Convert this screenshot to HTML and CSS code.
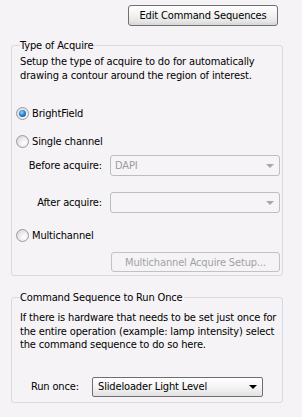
FILE: index.html
```html
<!DOCTYPE html>
<html>
<head>
<meta charset="utf-8">
<link rel="stylesheet" href="styles.css">
</head>
<body>
<div class="panel">
  <div class="top-row">
    <button class="btn btn-edit">Edit Command Sequences</button>
  </div>

  <fieldset class="group group-acquire">
    <legend>Type of Acquire</legend>
    <p class="desc">Setup the type of acquire to do for automatically drawing a contour around the region of interest.</p>

    <div class="radio-row r-bright">
      <span class="radio checked"><span class="dot"></span></span>
      <span class="label">BrightField</span>
    </div>
    <div class="radio-row r-single">
      <span class="radio"></span>
      <span class="label">Single channel</span>
    </div>
    <div class="field-row f-before">
      <span class="field-label">Before acquire:</span>
      <div class="combo disabled"><span class="value">DAPI</span><span class="arrow"></span></div>
    </div>
    <div class="field-row f-after">
      <span class="field-label">After acquire:</span>
      <div class="combo disabled"><span class="value"></span><span class="arrow"></span></div>
    </div>
    <div class="radio-row r-multi">
      <span class="radio"></span>
      <span class="label">Multichannel</span>
    </div>
    <div class="btn-row">
      <button class="btn btn-disabled">Multichannel Acquire Setup...</button>
    </div>
  </fieldset>

  <fieldset class="group group-once">
    <legend>Command Sequence to Run Once</legend>
    <p class="desc desc3">If there is hardware that needs to be set just once for the entire operation (example: lamp intensity) select the command sequence to do so here.</p>
    <div class="once-row">
      <span class="once-label">Run once:</span>
      <div class="combo active"><span class="value">Slideloader Light Level</span><span class="arrow"></span></div>
    </div>
  </fieldset>
</div>
</body>
</html>
```

FILE: styles.css
```css
html, body {
  margin: 0;
  padding: 0;
  background: #f5f3f6;
}
body {
  width: 302px;
  height: 417px;
  overflow: hidden;
  font-family: "DejaVu Sans Condensed", "Liberation Sans", Arial, sans-serif;
  font-size: 11px;
  letter-spacing: -0.15px;
  color: #000;
}
.panel {
  display: flex;
  flex-direction: column;
}
.top-row {
  display: flex;
  justify-content: flex-end;
  padding: 5px 24px 0 0;
}
.btn {
  font-family: inherit;
  font-size: 11px;
  letter-spacing: inherit;
  padding: 0;
  margin: 0;
  box-sizing: border-box;
  border-radius: 3px;
  cursor: default;
}
.btn-edit {
  width: 150px;
  height: 21px;
  border: 1px solid #707070;
  background: linear-gradient(#ffffff 0%, #f3f3f3 45%, #e6e6e6 80%, #d6d6d6 100%);
  color: #000;
}
.btn-disabled {
  width: 169px;
  height: 20px;
  border: 1px solid #c2c2c2;
  background: #f5f3f6;
  color: #a2a2a2;
}
.group {
  margin: 0 0 0 11px;
  width: 272px;
  box-sizing: border-box;
  border: 1px solid #d3dbe4;
  border-radius: 3px;
  padding: 0 2px 0 8px;
  min-width: 0;
}
.group legend {
  padding: 0 1px 0 0;
  margin-left: 0;
  line-height: 13px;
}
.group-acquire {
  margin-top: 13px;
  height: 237px;
}
.group-once {
  margin-top: 15px;
  height: 112px;
}
.desc {
  margin: 3px 0 0 0;
  line-height: 13.5px;
}
.desc3 {
  margin-top: 7px;
}
.radio-row {
  display: flex;
  align-items: center;
  height: 16px;
  margin-left: -4px;
}
.r-bright { margin-top: 23px; }
.r-single { margin-top: 12px; }
.r-multi { margin-top: 14px; }
.radio {
  width: 13px;
  height: 13px;
  box-sizing: border-box;
  border-radius: 50%;
  border: 1px solid #9a9a9a;
  background: radial-gradient(circle at 65% 65%, #ffffff 0%, #ececec 45%, #cfcfcf 100%);
  margin-right: 3px;
  display: flex;
  align-items: center;
  justify-content: center;
}
.radio .dot {
  width: 7px;
  height: 7px;
  border-radius: 50%;
  background: radial-gradient(circle at 40% 35%, #8fd6ff 0%, #2a86d4 45%, #0b3f8c 100%);
}
.field-row {
  display: flex;
  align-items: center;
  height: 21px;
}
.f-before { margin-top: 6px; }
.f-after { margin-top: 16px; }
.field-label {
  width: 90px;
  flex: none;
  white-space: nowrap;
  text-align: right;
  padding-right: 8px;
  box-sizing: border-box;
}
.combo {
  box-sizing: border-box;
  display: flex;
  align-items: center;
  justify-content: space-between;
  border-radius: 3px;
}
.combo.disabled {
  width: 170px;
  height: 21px;
  border: 1px solid #bdbdbd;
  background: #f6f4f7;
  color: #9c9c9c;
  padding: 0 5px 0 4px;
}
.combo.disabled .arrow {
  width: 0;
  height: 0;
  border-left: 4px solid transparent;
  border-right: 4px solid transparent;
  border-top: 4px solid #a8a8a8;
}
.btn-row {
  display: flex;
  margin-top: 9px;
  padding-left: 91px;
}
.once-row {
  display: flex;
  align-items: center;
  margin-top: 25px;
}
.once-label {
  width: 72px;
  flex: none;
  padding-left: 11px;
  box-sizing: border-box;
  white-space: nowrap;
}
.combo.active {
  width: 171px;
  height: 20px;
  border: 1px solid #6f6f6f;
  border-radius: 2px;
  background: linear-gradient(#ffffff 0%, #f4f4f4 50%, #e2e2e2 100%);
  padding: 0 5px 0 5px;
  color: #000;
}
.combo.active .arrow {
  width: 0;
  height: 0;
  border-left: 4px solid transparent;
  border-right: 4px solid transparent;
  border-top: 4px solid #000;
}
```
